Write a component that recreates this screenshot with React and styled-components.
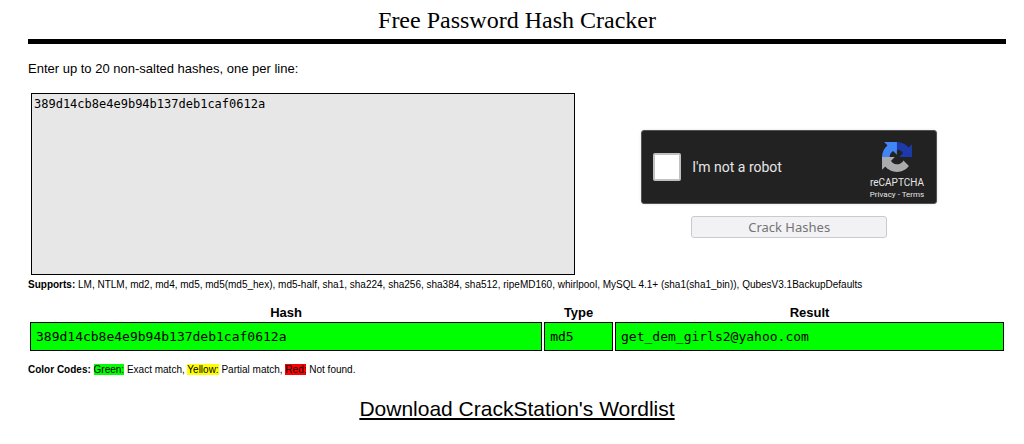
import React, { useState } from "react";
import styled, { createGlobalStyle } from "styled-components";

const GlobalStyle = createGlobalStyle`
  body {
    margin: 0;
    background-color: #fff;
    color: #000;
    font-family: "Liberation Sans", Arial, sans-serif;
    font-size: 13px;
  }
`;

const Page = styled.main`
  padding: 4px 18px 20px 28px;
`;

const Title = styled.h1`
  margin: 0;
  padding-bottom: 3px;
  border-bottom: 5px solid #000;
  font-family: "Liberation Serif", "Times New Roman", serif;
  font-size: 24px;
  font-weight: 400;
  line-height: 32px;
  text-align: center;
`;

const Instructions = styled.label`
  display: block;
  margin: 16px 0;
  line-height: 17px;
`;

const Form = styled.form`
  display: grid;
  grid-template-columns: 14fr 11fr;
  align-items: center;
  padding: 0 3px;
`;

const HashInput = styled.textarea`
  display: block;
  box-sizing: border-box;
  width: 100%;
  height: 182px;
  padding: 2px;
  border: 1px solid #000;
  background-color: #e7e7e7;
  color: #000;
  font-family: "DejaVu Sans Mono", monospace;
  font-size: 12px;
  line-height: 16px;
  resize: none;
`;

const Actions = styled.div`
  display: flex;
  flex-direction: column;
  align-items: center;
  gap: 12px;
`;

const Captcha = styled.div`
  box-sizing: border-box;
  display: flex;
  align-items: center;
  width: 296px;
  height: 74px;
  padding: 0 12px 0 11px;
  border: 1px solid #525252;
  border-radius: 3px;
  background-color: #222;
  color: #e6e6e6;
  font-family: Roboto, sans-serif;
  box-shadow: 0 0 3px rgba(0, 0, 0, 0.1);
`;

const CaptchaCheck = styled.input`
  appearance: none;
  box-sizing: border-box;
  width: 28px;
  height: 28px;
  margin: 0 11px 0 0;
  border: 2px solid #c1c1c1;
  border-radius: 2px;
  background-color: ${props => (props.checked ? "#4285f4" : "#fff")};
`;

const CaptchaLabel = styled.label`
  flex: 1;
  font-size: 14px;
`;

const CaptchaBrand = styled.div`
  display: flex;
  flex-direction: column;
  align-items: center;
  padding-top: 7px;
`;

const BrandName = styled.span`
  margin-top: 4px;
  font-size: 10px;
  line-height: 14px;
`;

const BrandLinks = styled.span`
  font-size: 8px;
  line-height: 10px;
`;

const BrandLink = styled.a`
  color: inherit;
  text-decoration: none;
`;

const CrackButton = styled.button`
  box-sizing: border-box;
  width: 196px;
  height: 22px;
  padding: 0;
  border: 1px solid #c9c9cf;
  border-radius: 3px;
  background-color: #f2f2f4;
  color: #747474;
  font-family: "Noto Sans", sans-serif;
  font-size: 13px;
  line-height: 20px;
`;

const Note = styled.p`
  margin: ${props => props.$margin};
  font-size: 10px;
  line-height: 14px;
`;

const Results = styled.table`
  width: 100%;
  table-layout: fixed;
  border-spacing: 2px;
`;

const HeadCell = styled.th`
  width: ${props => props.$width};
  padding: 0;
  font-size: 13px;
  line-height: 15px;
`;

const Cell = styled.td`
  padding: 5px;
  border: 1px solid #000;
  background-color: #0f0;
  font-family: "DejaVu Sans Mono", monospace;
  font-size: 13px;
  line-height: 17px;
`;

const Code = styled.span`
  background-color: ${props => props.$color};
`;

const Download = styled.div`
  margin-top: 19px;
  font-size: 21px;
  line-height: 26px;
  text-align: center;
`;

const DownloadLink = styled.a`
  color: #000;
`;

const RecaptchaLogo = () => (
  <svg width="30" height="30" viewBox="0 0 64 64" aria-hidden="true">
    <path
      fill="#1c3aa9"
      d="M64 31.955l-.033-1.37V4.687l-7.16 7.16C50.9 4.674 41.98.093 31.99.093c-10.4 0-19.63 4.96-25.474 12.64l11.736 11.86a15.55 15.55 0 0 1 4.754-5.334c2.05-1.6 4.952-2.906 8.968-2.906.485 0 .86.057 1.135.163 4.976.393 9.288 3.14 11.828 7.124l-8.307 8.307L64 31.953"
    />
    <path
      fill="#4285f4"
      d="M31.862.094l-1.37.033H4.594l7.16 7.16C4.58 13.147 0 22.06 0 32.05c0 10.4 4.96 19.63 12.64 25.474L24.5 45.788a15.55 15.55 0 0 1-5.334-4.754c-1.6-2.05-2.906-4.952-2.906-8.968 0-.485.057-.86.163-1.135.393-4.976 3.14-9.288 7.124-11.828l8.307 8.307L31.86.095"
    />
    <path
      fill="#ababab"
      d="M.001 32.045l.033 1.37v25.898l7.16-7.16c5.86 7.173 14.774 11.754 24.765 11.754 10.4 0 19.63-4.96 25.474-12.64l-11.736-11.86a15.55 15.55 0 0 1-4.754 5.334c-2.05 1.6-4.952 2.906-8.968 2.906-.485 0-.86-.057-1.135-.163-4.976-.393-9.288-3.14-11.828-7.124l8.307-8.307L.001 32.046"
    />
  </svg>
);

const results = [
  {
    hash: "389d14cb8e4e9b94b137deb1caf0612a",
    type: "md5",
    result: "get_dem_girls2@yahoo.com"
  }
];

const App = () => {
  const [hashes, setHashes] = useState("389d14cb8e4e9b94b137deb1caf0612a");
  const [human, setHuman] = useState(false);

  return (
    <>
      <GlobalStyle />
      <Page>
        <Title>Free Password Hash Cracker</Title>
        <Instructions htmlFor="hashes">
          Enter up to 20 non-salted hashes, one per line:
        </Instructions>
        <Form onSubmit={e => e.preventDefault()}>
          <HashInput
            id="hashes"
            spellCheck={false}
            value={hashes}
            onChange={e => setHashes(e.target.value)}
          />
          <Actions>
            <Captcha>
              <CaptchaCheck
                id="human"
                type="checkbox"
                checked={human}
                onChange={e => setHuman(e.target.checked)}
              />
              <CaptchaLabel htmlFor="human">I'm not a robot</CaptchaLabel>
              <CaptchaBrand>
                <RecaptchaLogo />
                <BrandName>reCAPTCHA</BrandName>
                <BrandLinks>
                  <BrandLink href="#privacy">Privacy</BrandLink>
                  {" - "}
                  <BrandLink href="#terms">Terms</BrandLink>
                </BrandLinks>
              </CaptchaBrand>
            </Captcha>
            <CrackButton type="submit">Crack Hashes</CrackButton>
          </Actions>
        </Form>
        <Note $margin="3px 0 11px">
          <b>Supports:</b> LM, NTLM, md2, md4, md5, md5(md5_hex), md5-half, sha1,
          sha224, sha256, sha384, sha512, ripeMD160, whirlpool, MySQL 4.1+
          (sha1(sha1_bin)), QubesV3.1BackupDefaults
        </Note>
        <Results>
          <thead>
            <tr>
              <HeadCell $width="52.8%">Hash</HeadCell>
              <HeadCell $width="7.1%">Type</HeadCell>
              <HeadCell>Result</HeadCell>
            </tr>
          </thead>
          <tbody>
            {results.map(row => (
              <tr key={row.hash}>
                <Cell>{row.hash}</Cell>
                <Cell>{row.type}</Cell>
                <Cell>{row.result}</Cell>
              </tr>
            ))}
          </tbody>
        </Results>
        <Note $margin="10px 0 0">
          <b>Color Codes:</b> <Code $color="#0f0">Green:</Code> Exact match,{" "}
          <Code $color="#ff0">Yellow:</Code> Partial match,{" "}
          <Code $color="#f00">Red:</Code> Not found.
        </Note>
        <Download>
          <DownloadLink href="#wordlist">
            Download CrackStation's Wordlist
          </DownloadLink>
        </Download>
      </Page>
    </>
  );
};

export default App;
